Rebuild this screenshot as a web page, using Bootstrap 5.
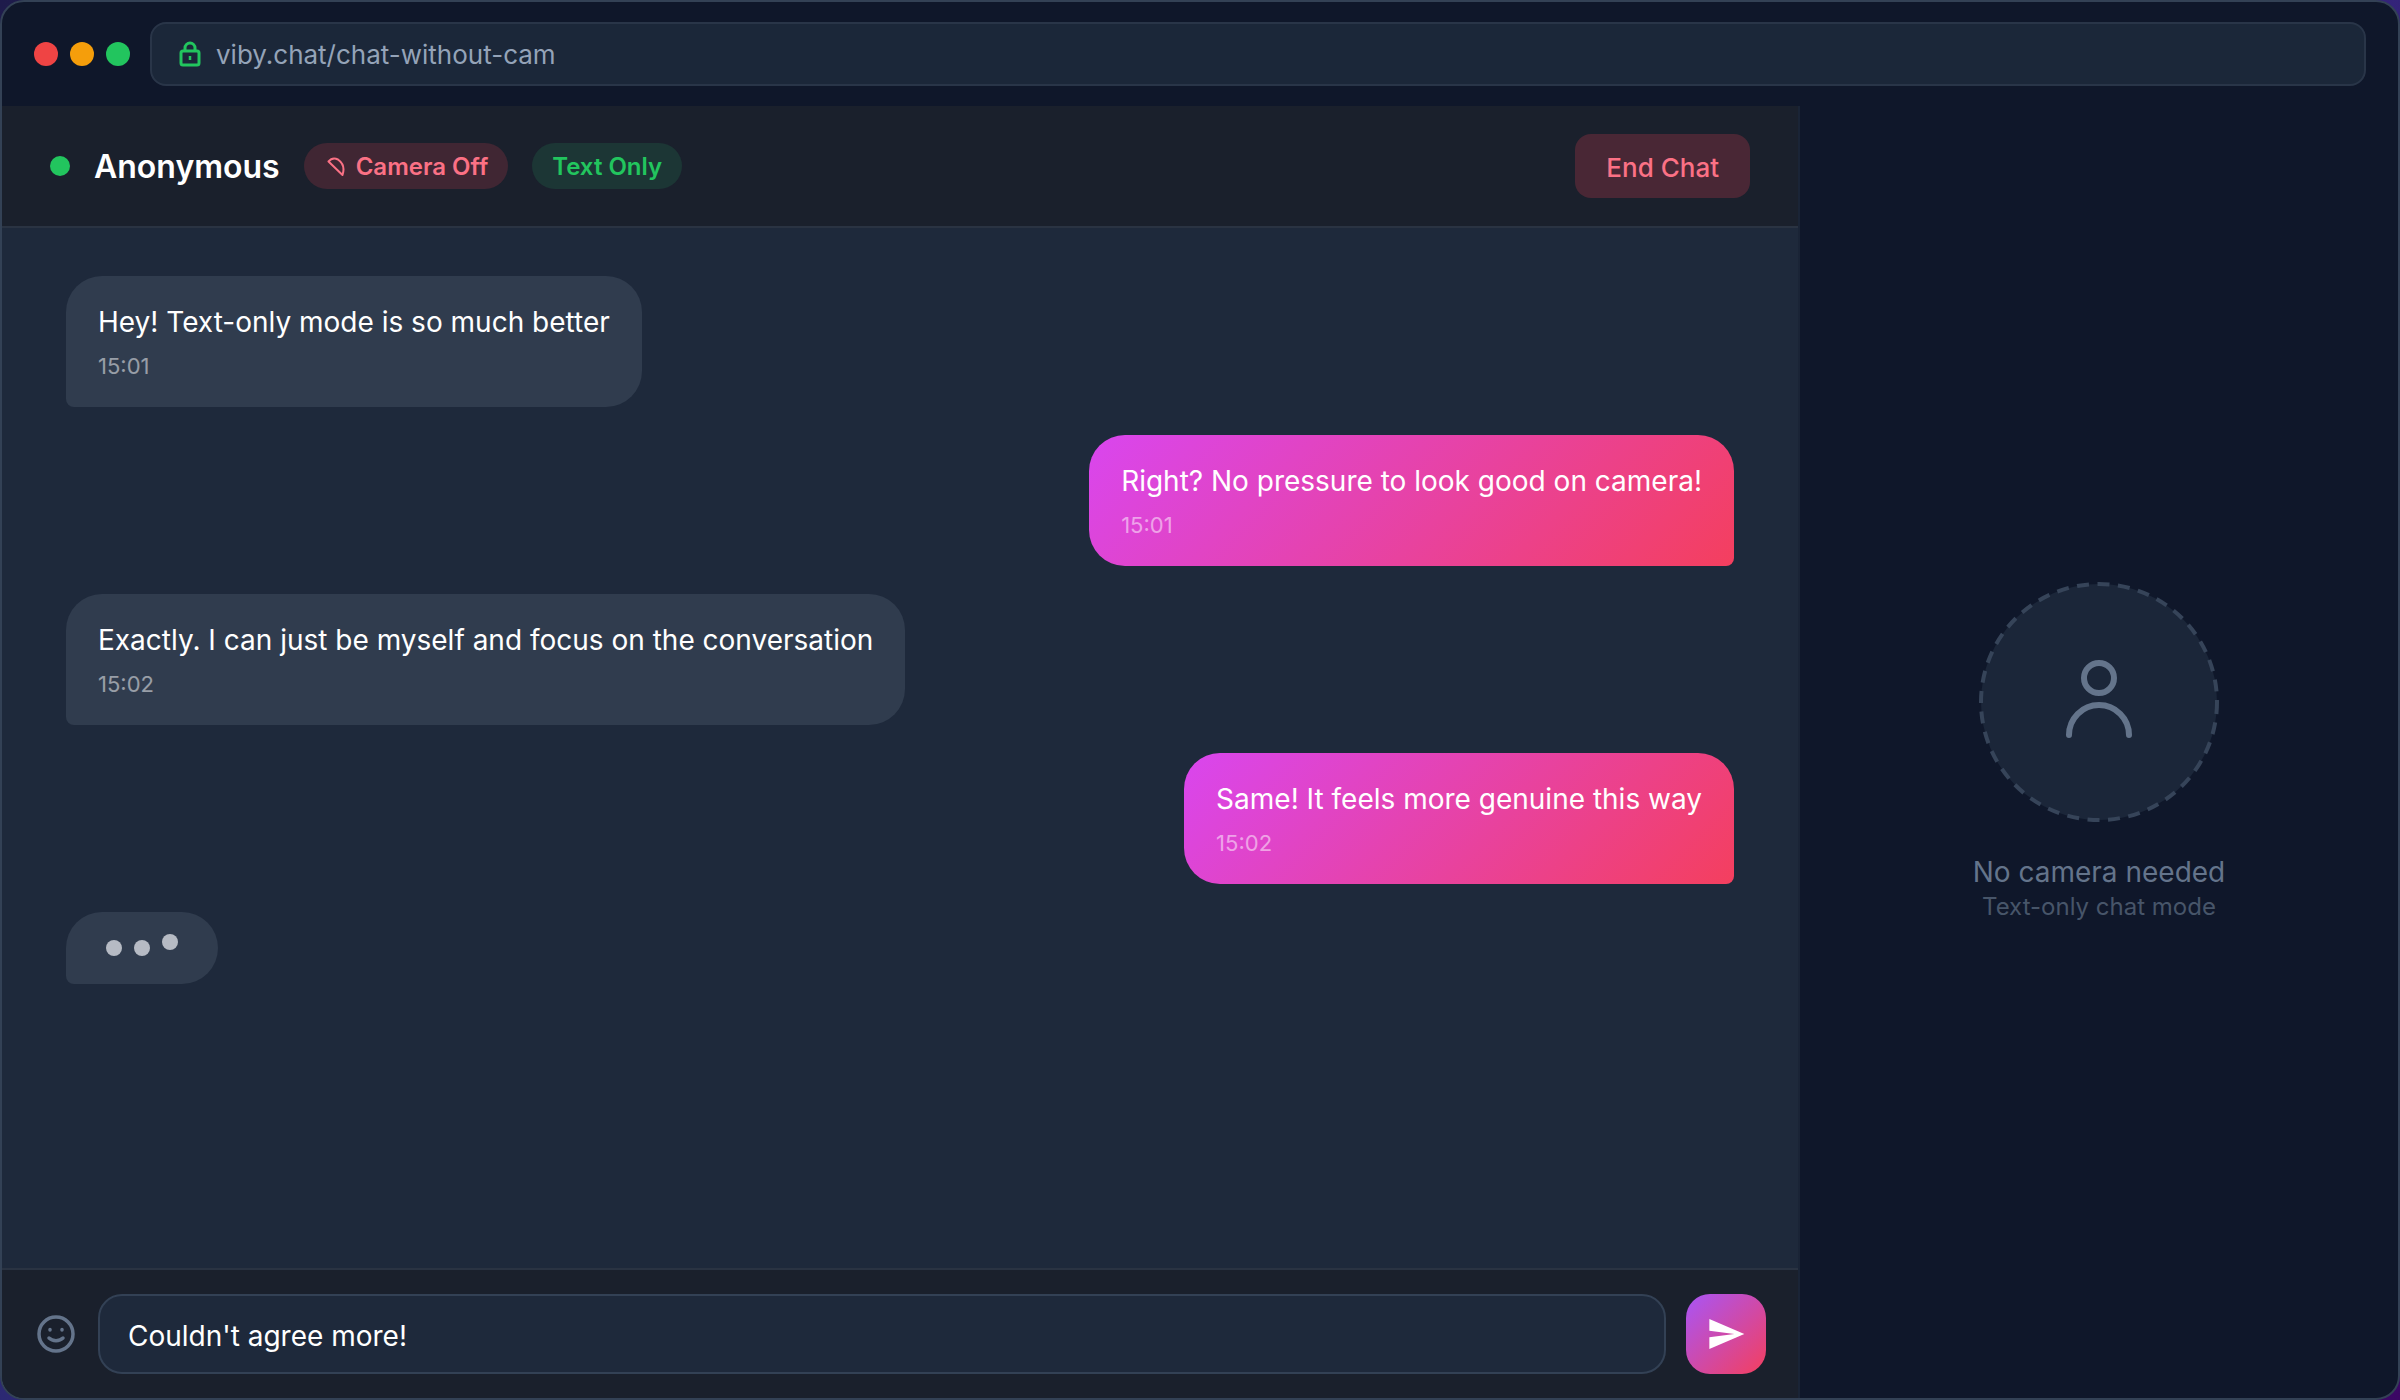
<!DOCTYPE html>
<html lang="en">
<head>
    <meta charset="UTF-8">
    <meta name="viewport" content="width=device-width, initial-scale=1.0">
    <title>viby.chat - chat without cam</title>
    <link href="https://cdn.jsdelivr.net/npm/bootstrap@5.3.0/dist/css/bootstrap.min.css" rel="stylesheet">
    <style>
        body {
            background: linear-gradient(135deg, #1e1b4b, #312e81 50%, #3b0764);
            font-family: Inter, "Noto Sans", sans-serif;
            height: 1400px;
            overflow: hidden;
        }
        .app-window {
            height: 1400px;
            background: #0f172a;
            border: 2px solid #334155;
            border-radius: 24px;
            overflow: hidden;
        }
        .top-bar { height: 104px; padding: 20px 32px 0; gap: 12px; align-items: flex-start; }
        .win-dot { width: 24px; height: 24px; border-radius: 50%; margin-top: 20px; }
        .dot-red { background: #ef4444; }
        .dot-amber { background: #f59e0b; }
        .dot-green { background: #22c55e; }
        .url-box {
            height: 64px;
            margin-left: 8px;
            padding: 0 26px;
            gap: 14px;
            background: #1b2739;
            border: 2px solid #293548;
            border-radius: 16px;
            color: #94a3b8;
            font-size: 26px;
        }
        .chat-side { width: 1798px; border-right: 2px solid #1a2436; background: #1e293b; }
        .chat-head {
            height: 122px;
            padding: 0 48px;
            gap: 24px;
            background: #1a202c;
            border-bottom: 2px solid #2a3342;
        }
        .live-dot { width: 20px; height: 20px; border-radius: 50%; background: #22c55e; }
        .peer-name { padding-top: 2px; font-size: 32px; font-weight: 600; color: #fff; }
        .tag-pill {
            height: 46px;
            padding: 2px 20px 0;
            border-radius: 23px;
            font-size: 24px;
            font-weight: 600;
        }
        .tag-off { padding-left: 22px; gap: 10px; background: #402633; color: #fb7185; }
        .tag-text { background: #1c3635; color: #22c55e; }
        .end-btn {
            height: 64px;
            padding: 2px 31px 0;
            border: 0;
            border-radius: 16px;
            background: #492735;
            color: #fb7185;
            font-size: 26px;
            font-weight: 500;
        }
        .msg-list { padding: 48px 64px; gap: 28px; }
        .bubble { padding: 24px 32px; font-size: 28px; line-height: 44.8px; color: #fff; }
        .bubble-in { background: #303c4e; border-radius: 36px 36px 36px 8px; }
        .bubble-out {
            background: linear-gradient(135deg, #d946ef, #f43f5e);
            border-radius: 36px 36px 8px 36px;
        }
        .msg-time { margin-top: 5.2px; font-size: 22px; line-height: 33px; opacity: .5; }
        .typing-box {
            height: 72px;
            padding: 0 40px;
            gap: 12px;
            background: #303c4e;
            border-radius: 36px 36px 36px 8px;
        }
        .typing-dot { width: 16px; height: 16px; border-radius: 50%; background: #b6bbc4; }
        .dot-up { margin-top: -12px; }
        .input-bar {
            height: 130px;
            padding: 0 32px 0 34px;
            background: #1a202c;
            border-top: 2px solid #2a3342;
        }
        .msg-input {
            flex: 1;
            height: 80px;
            margin: 0 20px 0 22px;
            padding: 3px 28px 0;
            background: #1e293b;
            border: 2px solid #334155;
            border-radius: 24px;
            color: #fff;
            font-size: 28px;
        }
        .send-btn {
            width: 80px;
            height: 80px;
            border: 0;
            border-radius: 24px;
            background: linear-gradient(135deg, #a855f7, #f43f5e);
        }
        .no-cam-title { margin-top: 30px; font-size: 28px; line-height: 40px; color: #64748b; }
        .no-cam-sub { font-size: 24px; line-height: 30px; color: #475569; }
    </style>
</head>
<body class="m-0">
    <div class="app-window d-flex flex-column">
        <!-- Browser toolbar -->
        <div class="top-bar d-flex flex-shrink-0">
            <span class="win-dot dot-red"></span>
            <span class="win-dot dot-amber"></span>
            <span class="win-dot dot-green"></span>
            <div class="url-box d-flex align-items-center flex-grow-1">
                <svg width="24" height="26" viewBox="0 0 24 26" fill="none" stroke="#22c55e" stroke-width="3">
                    <rect x="3" y="10" width="18" height="14" rx="2"/>
                    <path d="M7 10V7a5 5 0 0 1 10 0v3"/>
                    <path d="M12 15v4" stroke-width="2.5"/>
                </svg>
                <span>viby.chat/chat-without-cam</span>
            </div>
        </div>

        <div class="d-flex flex-grow-1" style="min-height: 0">
            <!-- Chat -->
            <div class="chat-side d-flex flex-column flex-shrink-0">
                <div class="chat-head d-flex align-items-center flex-shrink-0">
                    <span class="live-dot"></span>
                    <span class="peer-name">Anonymous</span>
                    <span class="tag-pill tag-off d-inline-flex align-items-center">
                        <svg width="20" height="20" viewBox="0 0 20 20" fill="none" stroke="#fb7185" stroke-width="2" stroke-linejoin="round">
                            <path d="M2.5 4.5 16.5 18C18.5 12 17 6 12 2.5 8.5.8 5 1.5 2.5 4.5Z"/>
                        </svg>
                        Camera Off
                    </span>
                    <span class="tag-pill tag-text d-inline-flex align-items-center">Text Only</span>
                    <button class="end-btn ms-auto" type="button">End Chat</button>
                </div>

                <div class="msg-list d-flex flex-column flex-grow-1">
                    <div class="bubble bubble-in align-self-start">
                        <div>Hey! Text-only mode is so much better</div>
                        <div class="msg-time">15:01</div>
                    </div>
                    <div class="bubble bubble-out align-self-end">
                        <div>Right? No pressure to look good on camera!</div>
                        <div class="msg-time">15:01</div>
                    </div>
                    <div class="bubble bubble-in align-self-start">
                        <div>Exactly. I can just be myself and focus on the conversation</div>
                        <div class="msg-time">15:02</div>
                    </div>
                    <div class="bubble bubble-out align-self-end">
                        <div>Same! It feels more genuine this way</div>
                        <div class="msg-time">15:02</div>
                    </div>
                    <div class="typing-box d-flex align-items-center align-self-start">
                        <span class="typing-dot"></span>
                        <span class="typing-dot"></span>
                        <span class="typing-dot dot-up"></span>
                    </div>
                </div>

                <div class="input-bar d-flex align-items-center flex-shrink-0">
                    <svg width="40" height="40" viewBox="0 0 40 40" fill="none" stroke="#64748b" stroke-width="3.5" stroke-linecap="round">
                        <circle cx="20" cy="20" r="17"/>
                        <path d="M13 24c3.5 3.5 10.5 3.5 14 0"/>
                        <path d="M14 15.5v.5M26 15.5v.5"/>
                    </svg>
                    <input class="msg-input" type="text" value="Couldn't agree more!">
                    <button class="send-btn d-flex align-items-center justify-content-center p-0" type="button" aria-label="Send">
                        <svg width="40" height="40" viewBox="0 0 24 24" fill="#fff"><path d="M2.01 21 23 12 2.01 3 2 10l15 2-15 2z"/></svg>
                    </button>
                </div>
            </div>

            <!-- No camera side -->
            <div class="d-flex flex-column align-items-center justify-content-center flex-grow-1">
                <svg width="240" height="240" viewBox="0 0 240 240" fill="none">
                    <circle cx="120" cy="120" r="118" fill="#1b2639" stroke="#364459" stroke-width="4" stroke-dasharray="12 8.53"/>
                    <g stroke="#64748b" stroke-width="6" stroke-linecap="round">
                        <circle cx="120" cy="96" r="15"/>
                        <path d="M90 153a30 30 0 0 1 60 0"/>
                    </g>
                </svg>
                <div class="no-cam-title">No camera needed</div>
                <div class="no-cam-sub">Text-only chat mode</div>
            </div>
        </div>
    </div>
    <script src="https://cdn.jsdelivr.net/npm/bootstrap@5.3.0/dist/js/bootstrap.bundle.min.js"></script>
</body>
</html>
